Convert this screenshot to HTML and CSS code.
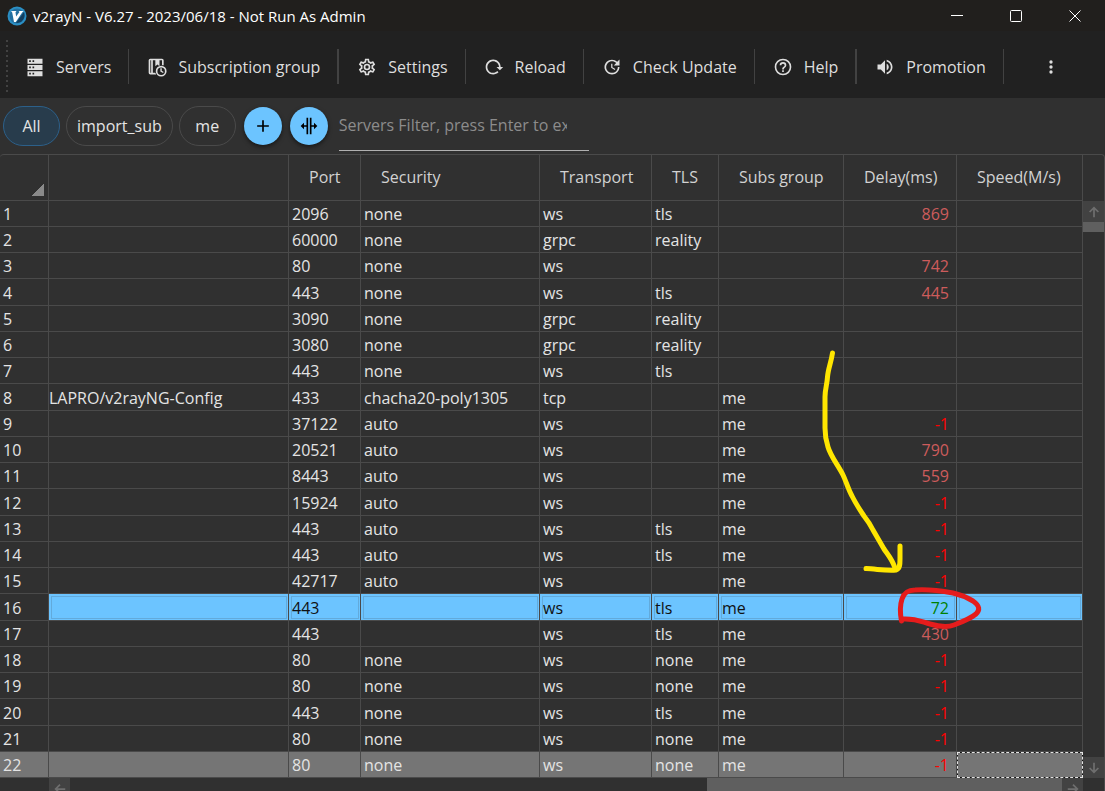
FILE: index.html
```html
<!DOCTYPE html>
<html lang="en">
<head>
  <meta charset="UTF-8">
  <title>v2rayN</title>
  <link rel="stylesheet" href="styles.css">
</head>
<body>

<header class="titlebar">
  <svg class="logo" viewBox="0 0 20 20" aria-hidden="true">
    <circle cx="10" cy="10" r="9.5" fill="#2b8fc4"/>
    <circle cx="10" cy="10" r="7.5" fill="#236f9f"/>
    <path d="M9 17 L17 6 A8 8 0 0 1 9 17Z" fill="#123e5e"/>
    <path d="M4 5h5.500l-1 1.200.6 4.300L12.500 6l-1-1H16.500l-1.500 1.800L8.800 16H7L5.200 6.500Z" fill="#fff"/>
  </svg>
  <span class="title">v2rayN - V6.27 - 2023/06/18 - Not Run As Admin</span>
  <div class="window-buttons">
    <button aria-label="Minimize"><svg viewBox="0 0 14 14"><path d="M1 6.500h12"/></svg></button>
    <button aria-label="Maximize"><svg viewBox="0 0 14 14"><rect x="1.500" y="1.500" width="11" height="11" rx="1"/></svg></button>
    <button aria-label="Close"><svg viewBox="0 0 14 14"><path d="M1.500 1.500l11 11M12.500 1.500l-11 11"/></svg></button>
  </div>
</header>

<nav class="toolbar">
  <span class="grip"></span>
  <button class="tool">
    <svg viewBox="0 0 24 24"><path fill-rule="evenodd" d="M3 2h18v6H3zM5 4v2h2V4zM9 4v2h2V4zM3 9.500h18v6H3zM5 11.500v2h2v-2zM9 11.500v2h2v-2zM3 17h18v6H3zM5 19v2h2v-2zM9 19v2h2v-2z"/></svg>
    Servers
  </button>
  <button class="tool thick">
    <svg viewBox="0 0 24 24"><path fill-rule="evenodd" d="M4 2h14a2 2 0 0 1 2 2v6h-2V4h-3v7l-2.500-2L10 11V4H7v15h3l1 2H4a2 2 0 0 1-2-2V4a2 2 0 0 1 2-2zM4 4v15h1V4z"/><circle cx="17" cy="17" r="5.500" fill="none" stroke="#dedede" stroke-width="2"/><path d="M16 13.500h1.700v3l2.300 1.500-.8 1.300-3.200-1.900z"/></svg>
    Subscription group
  </button>
  <button class="tool">
    <svg viewBox="0 0 24 24"><path d="M12,8A4,4 0 0,1 16,12A4,4 0 0,1 12,16A4,4 0 0,1 8,12A4,4 0 0,1 12,8M12,10A2,2 0 0,0 10,12A2,2 0 0,0 12,14A2,2 0 0,0 14,12A2,2 0 0,0 12,10M10,22C9.75,22 9.54,21.82 9.5,21.58L9.13,18.93C8.5,18.68 7.96,18.34 7.44,17.94L4.95,18.95C4.73,19.03 4.46,18.95 4.34,18.73L2.34,15.27C2.21,15.05 2.27,14.78 2.46,14.63L4.57,12.97L4.5,12L4.57,11L2.46,9.37C2.27,9.22 2.21,8.95 2.34,8.73L4.34,5.27C4.46,5.05 4.73,4.96 4.95,5.05L7.44,6.05C7.96,5.66 8.5,5.32 9.13,5.07L9.5,2.42C9.54,2.18 9.75,2 10,2H14C14.25,2 14.46,2.18 14.5,2.42L14.87,5.07C15.5,5.32 16.04,5.66 16.56,6.05L19.05,5.05C19.27,4.96 19.54,5.05 19.66,5.27L21.66,8.73C21.79,8.95 21.73,9.22 21.54,9.37L19.43,11L19.5,12L19.43,13L21.54,14.63C21.73,14.78 21.79,15.05 21.66,15.27L19.66,18.73C19.54,18.95 19.27,19.04 19.05,18.95L16.56,17.95C16.04,18.34 15.5,18.68 14.87,18.93L14.5,21.58C14.46,21.82 14.25,22 14,22H10M11.25,4L10.88,6.61C9.68,6.86 8.62,7.5 7.85,8.39L5.44,7.35L4.69,8.65L6.8,10.2C6.4,11.37 6.4,12.64 6.8,13.8L4.68,15.36L5.43,16.66L7.86,15.62C8.63,16.5 9.68,17.14 10.87,17.38L11.24,20H12.76L13.13,17.39C14.32,17.14 15.37,16.5 16.14,15.62L18.57,16.66L19.32,15.36L17.2,13.81C17.6,12.64 17.6,11.37 17.2,10.2L19.31,8.65L18.56,7.35L16.15,8.39C15.38,7.5 14.32,6.86 13.12,6.62L12.75,4H11.25Z"/></svg>
    Settings
  </button>
  <button class="tool">
    <svg viewBox="0 0 24 24"><path d="M2 12C2 16.97 6.03 21 11 21C13.39 21 15.68 20.06 17.4 18.4L15.9 16.9C14.63 18.25 12.86 19 11 19C4.76 19 1.64 11.46 6.05 7.05C10.46 2.64 18 5.77 18 12H15L19 16H19.1L23 12H20C20 7.03 15.97 3 11 3C6.03 3 2 7.03 2 12Z"/></svg>
    Reload
  </button>
  <button class="tool">
    <svg viewBox="0 0 24 24"><path d="M21,10.12H14.22L16.96,7.3C14.23,4.6 9.81,4.5 7.08,7.2C4.35,9.91 4.35,14.28 7.08,17C9.81,19.7 14.23,19.7 16.96,17C18.32,15.65 19,14.08 19,12.1H21C21,14.08 20.12,16.65 18.36,18.39C14.85,21.87 9.15,21.87 5.64,18.39C2.14,14.92 2.11,9.28 5.62,5.81C9.13,2.34 14.76,2.34 18.27,5.81L21,3V10.12M12.5,8V12.25L16,14.33L15.28,15.54L11,13V8H12.5Z"/></svg>
    Check Update
  </button>
  <button class="tool thick">
    <svg viewBox="0 0 24 24"><path d="M11,18H13V16H11V18M12,2A10,10 0 0,0 2,12A10,10 0 0,0 12,22A10,10 0 0,0 22,12A10,10 0 0,0 12,2M12,20C7.59,20 4,16.41 4,12C4,7.59 7.59,4 12,4C16.41,4 20,7.59 20,12C20,16.41 16.41,20 12,20M12,6A4,4 0 0,0 8,10H10A2,2 0 0,1 12,8A2,2 0 0,1 14,10C14,12 11,11.75 11,15H13C13,12.75 16,12.5 16,10A4,4 0 0,0 12,6Z"/></svg>
    Help
  </button>
  <button class="tool">
    <svg viewBox="0 0 24 24"><path d="M14,3.23V5.29C16.89,6.15 19,8.83 19,12C19,15.17 16.89,17.84 14,18.7V20.77C18,19.86 21,16.28 21,12C21,7.72 18,4.14 14,3.23M16.5,12C16.5,10.23 15.5,8.71 14,7.97V16C15.5,15.29 16.5,13.76 16.5,12M3,9V15H7L12,20V4L7,9H3Z"/></svg>
    Promotion
  </button>
  <button class="more" aria-label="More">
    <svg viewBox="0 0 24 24"><path d="M12,16A2,2 0 0,1 14,18A2,2 0 0,1 12,20A2,2 0 0,1 10,18A2,2 0 0,1 12,16M12,10A2,2 0 0,1 14,12A2,2 0 0,1 12,14A2,2 0 0,1 10,12A2,2 0 0,1 12,10M12,4A2,2 0 0,1 14,6A2,2 0 0,1 12,8A2,2 0 0,1 10,6A2,2 0 0,1 12,4Z"/></svg>
  </button>
</nav>

<div class="filters">
  <button class="chip active">All</button>
  <button class="chip">import_sub</button>
  <button class="chip">me</button>
  <button class="round" aria-label="Add group"><svg viewBox="0 0 24 24"><path d="M19,13H13V19H11V13H5V11H11V5H13V11H19V13Z"/></svg></button>
  <button class="round" aria-label="Auto column width"><svg viewBox="0 0 24 24"><path d="M18,16V13H15V22H13V2H15V11H18V8L22,12L18,16M2,12L6,16V13H9V22H11V2H9V11H6V8L2,12Z"/></svg></button>
  <div class="search">
    <input type="text" aria-label="Servers Filter" placeholder="Servers Filter, press Enter to execute">
  </div>
</div>

<main class="grid">
  <table>
    <colgroup>
      <col class="c-num"><col><col class="c-port"><col class="c-security"><col class="c-transport">
      <col class="c-tls"><col class="c-subs"><col class="c-delay"><col class="c-speed">
    </colgroup>
    <thead>
      <tr>
        <th class="corner"></th><th></th><th>Port</th><th>Security</th><th>Transport</th>
        <th>TLS</th><th>Subs group</th><th>Delay(ms)</th><th>Speed(M/s)</th>
      </tr>
    </thead>
    <tbody id="servers"></tbody>
  </table>

  <div class="vscroll">
    <button class="arrow" aria-label="Scroll up"><svg viewBox="0 0 16 16"><path d="M8 14V3M3 8l5-5 5 5"/></svg></button>
    <div class="thumb"></div>
    <button class="arrow down" aria-label="Scroll down"><svg viewBox="0 0 16 16"><path d="M8 2v11M3 8l5 5 5-5"/></svg></button>
  </div>

  <div class="hscroll">
    <button class="arrow" aria-label="Scroll left"><svg viewBox="0 0 16 16"><path d="M14 8H3M8 3L3 8l5 5"/></svg></button>
    <div class="track"></div>
    <div class="thumb"></div>
    <button class="arrow" aria-label="Scroll right"><svg viewBox="0 0 16 16"><path d="M2 8h11M8 3l5 5-5 5"/></svg></button>
  </div>

  <!-- pen marks over the fastest server -->
  <svg class="marks" viewBox="800 340 200 300" aria-hidden="true">
    <path class="yellow" d="M832.500 352C831 362 828 368 827.500 376C827 384 825 388 825 396V427C825 435 826 440 828 446C831 456 838 464 843 474C846 480 848 488 852 495C856 503 860 509 864 515C868 520 870 523 873 529L884 548C888 554 892 558 895 567"/>
    <path class="yellow" d="M866 567.500C877 568 887 570 896 569C900 568 900 563 900 558V545"/>
    <path class="red" d="M901.500 620C900 612 900 604 902 598C904 592 907 589 915 589C928 588 942 590 953 592C962 594 968 597 973 600C980 605 980 609 976 613C970 618 962 621 954 624C946 627 937 625 930 623C922 621 916 617 902 618"/>
  </svg>
</main>

<script>
  // remark, port, security, transport, tls, group, delay
  const servers = [
    ['', '2096', 'none', 'ws', 'tls', '', '869'],
    ['', '60000', 'none', 'grpc', 'reality', '', ''],
    ['', '80', 'none', 'ws', '', '', '742'],
    ['', '443', 'none', 'ws', 'tls', '', '445'],
    ['', '3090', 'none', 'grpc', 'reality', '', ''],
    ['', '3080', 'none', 'grpc', 'reality', '', ''],
    ['', '443', 'none', 'ws', 'tls', '', ''],
    ['LAPRO/v2rayNG-Config', '433', 'chacha20-poly1305', 'tcp', '', 'me', ''],
    ['', '37122', 'auto', 'ws', '', 'me', '-1'],
    ['', '20521', 'auto', 'ws', '', 'me', '790'],
    ['', '8443', 'auto', 'ws', '', 'me', '559'],
    ['', '15924', 'auto', 'ws', '', 'me', '-1'],
    ['', '443', 'auto', 'ws', 'tls', 'me', '-1'],
    ['', '443', 'auto', 'ws', 'tls', 'me', '-1'],
    ['', '42717', 'auto', 'ws', '', 'me', '-1'],
    ['', '443', '', 'ws', 'tls', 'me', '72'],
    ['', '443', '', 'ws', 'tls', 'me', '430'],
    ['', '80', 'none', 'ws', 'none', 'me', '-1'],
    ['', '80', 'none', 'ws', 'none', 'me', '-1'],
    ['', '443', 'none', 'ws', 'tls', 'me', '-1'],
    ['', '80', 'none', 'ws', 'none', 'me', '-1'],
    ['', '80', 'none', 'ws', 'none', 'me', '-1']
  ];

  function delayClass(delay) {
    if (delay === '-1') return 'delay failed';
    return Number(delay) < 200 ? 'delay fast' : 'delay';
  }

  document.getElementById('servers').innerHTML = servers.map((row, i) => {
    const state = i === 15 ? 'selected' : (i === 21 ? 'current' : '');
    const cells = row.slice(0, 6).map((text, c) => `<td${c === 0 ? ' class="remark"' : ''}>${text}</td>`).join('');
    return `<tr class="${state}"><th scope="row">${i + 1}</th>${cells}<td class="${delayClass(row[6])}">${row[6]}</td><td></td></tr>`;
  }).join('');
</script>

</body>
</html>
```
FILE: styles.css
```css
* {
  box-sizing: border-box;
}

body {
  margin: 0;
  height: 100vh;
  overflow: hidden;
  background-color: #303030;
  color: #e4e4e4;
  font-family: "Open Sans", "Noto Sans", sans-serif;
  font-size: 16px;
}

button {
  font: inherit;
  color: inherit;
  background: none;
  border: none;
  padding: 0;
}

svg {
  display: block;
}

.titlebar {
  display: flex;
  align-items: center;
  height: 31px;
  padding: 0 1px 0 7px;
  background-color: #211f1d;
  color: #fff;
}

.logo {
  width: 20px;
  height: 20px;
  margin-right: 6px;
}

.title {
  font-size: 15px;
  line-height: 18px;
}

.window-buttons {
  display: flex;
  margin-left: auto;
}

.window-buttons button {
  display: flex;
  justify-content: center;
  width: 59px;
}

.window-buttons svg {
  width: 14px;
  height: 14px;
  fill: none;
  stroke: #fff;
}

.toolbar {
  display: flex;
  align-items: center;
  height: 67px;
  padding-top: 4px;
  background-color: #212121;
  color: #dedede;
}

.grip {
  width: 2px;
  height: 54px;
  margin-left: 6px;
  background: repeating-linear-gradient(#424242 0 2px, transparent 2px 5px);
}

.tool {
  display: flex;
  align-items: center;
  gap: 11px;
  height: 35px;
  padding: 0 17px;
  border-right: 1px solid #424242;
  white-space: nowrap;
}

.tool + .tool {
  padding-left: 18px;
}

.tool.thick {
  border-right-width: 2px;
}

.tool svg,
.more svg {
  width: 20px;
  height: 20px;
  fill: #dedede;
}

.more {
  margin-left: 37px;
}

.filters {
  display: flex;
  align-items: center;
  height: 56px;
  padding-left: 3px;
  gap: 6px;
}

.chip {
  height: 40px;
  padding: 0 10px;
  min-width: 57px;
  border: 1px solid #4a4a4a;
  border-radius: 20px;
}

.chip.active {
  background-color: #283c4c;
  border-color: #2c608a;
}

.round {
  display: grid;
  place-items: center;
  width: 38px;
  height: 38px;
  margin-left: 2px;
  border-radius: 50%;
  background-color: #6cc4ff;
  box-shadow: 0 2px 4px rgba(0, 0, 0, 0.5);
}

.round svg {
  width: 20px;
  height: 20px;
}

.search {
  width: 250px;
  height: 49px;
  margin-left: 5px;
  border-bottom: 1px solid #b0b0b0;
}

.search input {
  width: 228px;
  height: 46px;
  padding: 0;
  border: none;
  outline: none;
  background: none;
  font: inherit;
  color: #e4e4e4;
}

.search input::placeholder {
  color: #8c8c8c;
}

.grid {
  position: relative;
  display: grid;
  grid-template-columns: 1fr 21px;
  border-top: 1px solid #4a4a4a;
  border-right: 1px solid #4a4a4a;
  border-radius: 4px 4px 0 0;
}

table {
  width: 100%;
  table-layout: fixed;
  border-collapse: separate;
  border-spacing: 0;
}

.c-num { width: 49px; }
.c-port { width: 72px; }
.c-security { width: 179px; }
.c-transport { width: 112px; }
.c-tls { width: 67px; }
.c-subs { width: 125px; }
.c-delay { width: 113px; }
.c-speed { width: 126px; }

th,
td {
  padding: 1px 3px 0;
  border-right: 1px solid #4a4a4a;
  border-bottom: 1px solid #4a4a4a;
  font-weight: normal;
  text-align: left;
  white-space: nowrap;
  overflow: hidden;
}

thead th {
  height: 46px;
  padding: 0 0 1px 20px;
  color: #d2d2d2;
}

thead .corner {
  background: linear-gradient(135deg, transparent 50%, #8a8a8a 50%) no-repeat right 4px bottom 4px / 12px 12px;
}

tbody tr {
  height: 26px;
  line-height: 20px;
}

tbody tr:nth-child(4n) {
  height: 27px;
}

.remark {
  padding-left: 0;
}

.delay {
  padding-right: 7px;
  text-align: right;
  color: #cd5c5c;
}

.delay.failed {
  color: #f00;
}

.selected td {
  background-color: #6cc4ff;
  color: #111;
  outline: 1px solid #62aadb;
  outline-offset: -3px;
}

.selected .fast {
  color: #008000;
}

.current th,
.current td {
  background-color: #757575;
}

/* focused cell: light dots on a dark edge */
.current td:last-child {
  border: 1px dashed #e4e4e4;
  background: linear-gradient(#757575, #757575) padding-box, #111 border-box;
}

.vscroll {
  display: flex;
  flex-direction: column;
  padding-top: 46px;
}

.arrow {
  display: grid;
  place-items: center;
  flex: none;
  width: 21px;
  height: 21px;
  background-color: #424242;
}

.arrow svg {
  width: 14px;
  height: 14px;
  fill: none;
  stroke: #6e6e6e;
  stroke-width: 2;
}

.vscroll .thumb {
  height: 10px;
  background-color: #5f5f5f;
}

.arrow.down {
  margin-top: auto;
}

.hscroll {
  display: flex;
  margin-left: 49px;
}

.hscroll .track {
  flex: 637;
}

.hscroll .thumb {
  flex: 355;
  background-color: #5f5f5f;
}

.marks {
  position: absolute;
  top: 186px;
  right: 104px;
  width: 200px;
  height: 300px;
  fill: none;
  stroke-linecap: round;
  stroke-linejoin: round;
}

.yellow {
  stroke: #ffe600;
  stroke-width: 5;
}

.red {
  stroke: #e51c1c;
  stroke-width: 5;
}
```
